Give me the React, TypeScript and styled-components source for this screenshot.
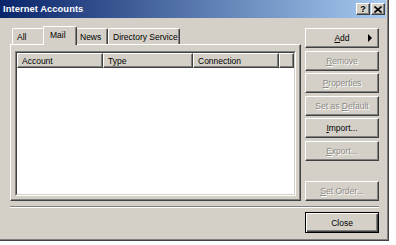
import styled, { createGlobalStyle } from 'styled-components';

const GlobalStyle = createGlobalStyle`
  html, body {
    margin: 0;
    padding: 0;
    background: #fff;
  }
  body {
    font-family: 'Liberation Sans', Arial, sans-serif;
  }
`;

const Window = styled.div`
  width: 389px;
  height: 241px;
  box-sizing: border-box;
  background: #d4d0c8;
  border-right: 1px solid #404040;
  border-bottom: 1px solid #404040;
  box-shadow: inset -1px -1px 0 #808080;
  display: flex;
  flex-direction: column;
  font-family: 'Liberation Sans', Arial, sans-serif;
  font-size: 8.5px;
  color: #000;
`;

const TitleBar = styled.div`
  height: 18px;
  margin-right: 2px;
  padding: 0 1px 0 3px;
  background: linear-gradient(to right, #0a246a, #a6caf0);
  display: flex;
  align-items: center;
  gap: 1px;
`;

const Title = styled.span`
  flex: 1;
  color: #fff;
  font-weight: bold;
  font-size: 9.3px;
  letter-spacing: 0.1px;
`;

const CaptionButton = styled.div`
  box-sizing: border-box;
  width: 14px;
  height: 12px;
  background: #d4d0c8;
  border: 1px solid;
  border-color: #fff #404040 #404040 #fff;
  box-shadow: inset -1px -1px 0 #808080;
  display: flex;
  align-items: center;
  justify-content: center;
  font-weight: bold;
  font-size: 9px;
  line-height: 1;
`;

const Body = styled.div`
  flex: 1;
  display: flex;
  flex-direction: column;
  padding: 8px 9px 0 10px;
`;

const MainRow = styled.div`
  height: 175px;
  display: flex;
  gap: 4px;
`;

const LeftColumn = styled.div`
  width: 291px;
  display: flex;
  flex-direction: column;
`;

const TabStrip = styled.div`
  height: 18px;
  display: flex;
  align-items: flex-end;
  padding-left: 2px;
  position: relative;
  z-index: 1;
`;

const Tab = styled.div<{ $w: number; $active?: boolean }>`
  box-sizing: border-box;
  width: ${(p) => (p.$active ? p.$w + 4 : p.$w)}px;
  height: ${(p) => (p.$active ? 19 : 16)}px;
  margin: 0 ${(p) => (p.$active ? -2 : 0)}px ${(p) => (p.$active ? -1 : 0)}px;
  padding: 0 0 ${(p) => (p.$active ? 2 : 0)}px ${(p) => (p.$active ? 6 : 4)}px;
  background: #d4d0c8;
  border-top: 1px solid #fff;
  border-left: 1px solid #fff;
  border-right: 1px solid #404040;
  border-top-left-radius: 2px;
  border-top-right-radius: 2px;
  box-shadow: inset -1px 0 0 #808080;
  display: flex;
  align-items: center;
  white-space: nowrap;
  position: relative;
  z-index: ${(p) => (p.$active ? 2 : 1)};
`;

const Panel = styled.div`
  flex: 1;
  box-sizing: border-box;
  border: 1px solid;
  border-color: #fff #404040 #404040 #fff;
  box-shadow: inset -1px -1px 0 #808080;
  padding: 6px 4px 4px 4px;
  display: flex;
`;

const ListOuter = styled.div`
  flex: 1;
  display: flex;
  border: 1px solid;
  border-color: #808080 #fff #fff #808080;
`;

const ListInner = styled.div`
  flex: 1;
  background: #fff;
  border: 1px solid;
  border-color: #404040 #d4d0c8 #d4d0c8 #404040;
`;

const HeaderRow = styled.div`
  display: flex;
  height: 15px;
`;

const HeaderCell = styled.div<{ $w?: number }>`
  box-sizing: border-box;
  ${(p) => (p.$w ? `width: ${p.$w}px;` : 'flex: 1;')}
  height: 15px;
  background: #d4d0c8;
  border: 1px solid;
  border-color: #fff #404040 #404040 #fff;
  box-shadow: inset -1px -1px 0 #808080;
  padding-left: 4px;
  display: flex;
  align-items: center;
  white-space: nowrap;
`;

const RightColumn = styled.div`
  width: 74px;
  display: flex;
  flex-direction: column;
  gap: 2.6px;
  padding-top: 2px;
`;

const Spacer = styled.div`
  flex: 1;
`;

const Button = styled.div<{ $disabled?: boolean; $default?: boolean }>`
  box-sizing: border-box;
  height: ${(p) => (p.$default ? 21 : 20)}px;
  width: 74px;
  flex-shrink: 0;
  background: #d4d0c8;
  border: 1px solid;
  border-color: ${(p) => (p.$default ? '#000' : '#fff #404040 #404040 #fff')};
  box-shadow: ${(p) =>
    p.$default
      ? 'inset 1px 1px 0 #fff, inset -1px -1px 0 #404040, inset -2px -2px 0 #808080'
      : 'inset -1px -1px 0 #808080'};
  color: ${(p) => (p.$disabled ? '#8c8a85' : '#000')};
  text-shadow: ${(p) => (p.$disabled ? '1px 1px 0 #fff' : 'none')};
  display: flex;
  align-items: center;
  justify-content: center;
  position: relative;
  white-space: nowrap;
`;

const Key = styled.span`
  text-decoration: underline;
`;

const Arrow = styled.span`
  position: absolute;
  right: 6px;
  top: 50%;
  margin-top: -4px;
  width: 0;
  height: 0;
  border-top: 4px solid transparent;
  border-bottom: 4px solid transparent;
  border-left: 4px solid #000;
`;

const Separator = styled.div`
  height: 0;
  border-top: 1px solid #808080;
  border-bottom: 1px solid #fff;
  margin: 5px 0 4px;
`;

const Footer = styled.div`
  display: flex;
  justify-content: flex-end;
`;

export default function App() {
  return (
    <>
      <GlobalStyle />
      <Window>
        <TitleBar>
          <Title>Internet Accounts</Title>
          <CaptionButton>?</CaptionButton>
          <CaptionButton>
            <svg width="8" height="7" viewBox="0 0 8 7">
              <path d="M0.5 0.5 L7.5 6.5 M7.5 0.5 L0.5 6.5" stroke="#000" strokeWidth="1.6" />
            </svg>
          </CaptionButton>
        </TitleBar>
        <Body>
          <MainRow>
            <LeftColumn>
              <TabStrip>
                <Tab $w={33}>All</Tab>
                <Tab $w={30} $active>
                  Mail
                </Tab>
                <Tab $w={33}>News</Tab>
                <Tab $w={72}>Directory Service</Tab>
              </TabStrip>
              <Panel>
                <ListOuter>
                  <ListInner>
                    <HeaderRow>
                      <HeaderCell $w={86}>Account</HeaderCell>
                      <HeaderCell $w={90}>Type</HeaderCell>
                      <HeaderCell $w={86}>Connection</HeaderCell>
                      <HeaderCell />
                    </HeaderRow>
                  </ListInner>
                </ListOuter>
              </Panel>
            </LeftColumn>
            <RightColumn>
              <Button>
                <span>
                  <Key>A</Key>dd
                </span>
                <Arrow />
              </Button>
              <Button $disabled>
                <span>
                  <Key>R</Key>emove
                </span>
              </Button>
              <Button $disabled>
                <span>
                  <Key>P</Key>roperties
                </span>
              </Button>
              <Button $disabled>
                <span>
                  Set as <Key>D</Key>efault
                </span>
              </Button>
              <Button>
                <span>
                  <Key>I</Key>mport...
                </span>
              </Button>
              <Button $disabled>
                <span>
                  <Key>E</Key>xport...
                </span>
              </Button>
              <Spacer />
              <Button $disabled>
                <span>
                  <Key>S</Key>et Order...
                </span>
              </Button>
            </RightColumn>
          </MainRow>
          <Separator />
          <Footer>
            <Button $default>Close</Button>
          </Footer>
        </Body>
      </Window>
    </>
  );
}
